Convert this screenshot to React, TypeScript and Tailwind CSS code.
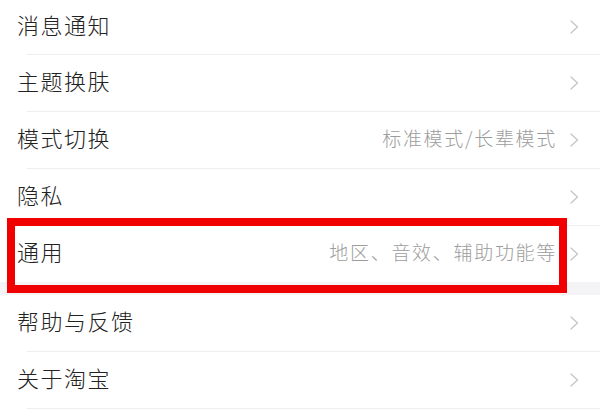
import React from "react";

type Item = { title: string; sub?: string; first?: boolean; divider?: boolean };

const Chevron = () => (
  <svg width="9" height="14" viewBox="0 0 9 14" className="ml-[13px] shrink-0">
    <path d="M1 1 L7.5 7 L1 13" fill="none" stroke="#c4c4c4" strokeWidth="1.2" strokeLinecap="round" strokeLinejoin="round" />
  </svg>
);

const Row = ({ title, sub, first, divider = true }: Item) => (
  <div className="bg-white">
    <div className={`flex items-center pl-[17px] pr-[21px] ${first ? "h-[54px]" : "h-[56px]"}`}>
      <span className="text-[22px] tracking-[1.5px] font-light text-[#222222] leading-none -translate-y-[3px]">{title}</span>
      <span className="flex-1" />
      {sub && (
        <span className="text-[19px] tracking-[1.7px] font-light text-[#9c9c9c] leading-none -translate-y-[3px]">{sub}</span>
      )}
      <Chevron />
    </div>
    {divider && <div className="ml-[27px] h-px bg-[#eeeeee]" />}
  </div>
);

export default function App() {
  return (
    <div
      className="relative w-[600px] h-[420px] bg-white overflow-hidden"
      style={{ fontFamily: '"Noto Sans CJK SC", "Noto Sans", sans-serif' }}
    >
      <Row title="消息通知" first />
      <Row title="主题换肤" />
      <Row title="模式切换" sub="标准模式/长辈模式" />
      <Row title="隐私" />
      <Row title="通用" sub="地区、音效、辅助功能等" divider={false} />
      <div className="h-[13px] bg-[#f4f4f6]" />
      <Row title="帮助与反馈" />
      <Row title="关于淘宝" />
      <div className="absolute left-[7px] top-[218px] w-[560px] h-[75px] border-[8px] border-[#f00000]" />
    </div>
  );
}
